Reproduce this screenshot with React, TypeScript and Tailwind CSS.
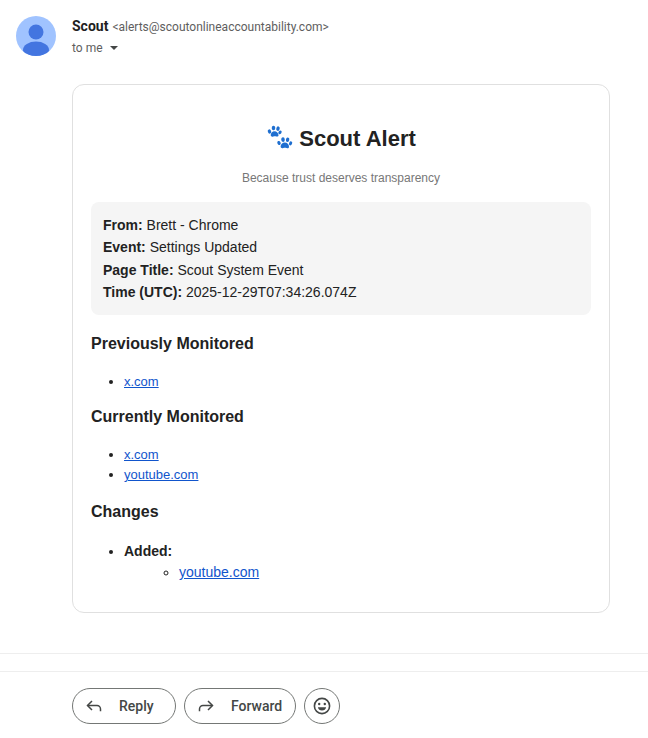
const Paw = () => (
  <svg width="28" height="28" viewBox="0 0 28 28" fill="#1f6fd0" className="shrink-0">
    <ellipse cx="3.5" cy="7.5" rx="1.7" ry="2.2" transform="rotate(-20 3.5 7.5)" />
    <ellipse cx="7.5" cy="4" rx="1.8" ry="2.3" transform="rotate(-5 7.5 4)" />
    <ellipse cx="12" cy="4.6" rx="1.7" ry="2.3" transform="rotate(15 12 4.6)" />
    <ellipse cx="14" cy="8.4" rx="1.5" ry="2" transform="rotate(35 14 8.4)" />
    <path d="M8.5 7.2c2.2 0 4 2 4 4 0 1.5-1.3 1.5-2.2 1.2-1.1-.4-2-.3-3 .2-1.2.5-2.6 0-2.6-1.5 0-2 1.6-3.9 3.8-3.9z" />
    <ellipse cx="13" cy="19" rx="1.6" ry="2.1" transform="rotate(-25 13 19)" />
    <ellipse cx="17" cy="15.6" rx="1.8" ry="2.3" transform="rotate(-5 17 15.6)" />
    <ellipse cx="21.6" cy="15.8" rx="1.7" ry="2.3" transform="rotate(10 21.6 15.8)" />
    <ellipse cx="24.6" cy="19.4" rx="1.5" ry="2.1" transform="rotate(25 24.6 19.4)" />
    <path d="M18.8 18.6c2.4 0 4.2 2 4.2 4.1 0 1.6-1.4 1.7-2.4 1.3-1.2-.4-2.2-.4-3.3.1-1.2.5-2.7.1-2.7-1.5 0-2.1 1.9-4 4.2-4z" />
  </svg>
);

const ReplyIcon = () => (
  <svg width="20" height="20" viewBox="0 0 20 20" fill="none" stroke="#444746" strokeWidth="1.5">
    <path d="M8 5 3.5 9.5 8 14" />
    <path d="M3.8 9.5H13a3.5 3.5 0 0 1 3.5 3.5v2.2" />
  </svg>
);

const ForwardIcon = () => (
  <svg width="20" height="20" viewBox="0 0 20 20" fill="none" stroke="#444746" strokeWidth="1.5">
    <path d="M12 5l4.5 4.5L12 14" />
    <path d="M16.2 9.5H7A3.5 3.5 0 0 0 3.5 13v2.2" />
  </svg>
);

const SmileIcon = () => (
  <svg width="20" height="20" viewBox="0 0 20 20">
    <circle cx="10" cy="10" r="7.6" fill="none" stroke="#444746" strokeWidth="1.6" />
    <circle cx="7.2" cy="8" r="1.2" fill="#444746" />
    <circle cx="12.8" cy="8" r="1.2" fill="#444746" />
    <path d="M5.9 11.2h8.2a4.2 4.2 0 0 1-8.2 0z" fill="#444746" />
  </svg>
);

const linkClass = "text-[#1155cc] underline";

export default function App() {
  return (
    <div className="w-[648px] h-[738px] overflow-hidden bg-white font-['Liberation_Sans',Arial,sans-serif] text-[#222]">
      {/* sender row */}
      <div className="flex pl-4 pt-4 h-[84px]">
        <svg width="40" height="40" viewBox="0 0 40 40" className="shrink-0">
          <defs>
            <clipPath id="av">
              <circle cx="20" cy="20" r="20" />
            </clipPath>
          </defs>
          <circle cx="20" cy="20" r="20" fill="#a0c3ff" />
          <g clipPath="url(#av)" fill="#4375e0">
            <circle cx="20" cy="16" r="7.5" />
            <ellipse cx="20" cy="34" rx="13" ry="8.5" />
          </g>
        </svg>
        <div className="ml-4 font-['Roboto',sans-serif]">
          <div className="flex items-baseline h-5 leading-5">
            <span className="text-[14px] font-bold text-[#1f1f1f]">Scout</span>
            <span className="ml-1 text-[12px] text-[#5e5e5e]">&lt;alerts@scoutonlineaccountability.com&gt;</span>
          </div>
          <div className="flex items-center h-5 mt-0.5 text-[12px] text-[#5e5e5e]">
            to me
            <span className="ml-[7px] w-0 h-0 border-x-4 border-t-4 border-x-transparent border-t-[#444746]" />
          </div>
        </div>
      </div>

      {/* message card */}
      <div className="ml-[72px] w-[538px] h-[529px] rounded-xl border border-[#e0e0e0] px-[18px] pt-[18px]">
        <div className="flex justify-center items-center gap-[5px] h-[70px]">
          <Paw />
          <h1 className="text-[22px] font-bold text-[#222]">Scout Alert</h1>
        </div>
        <p className="text-center text-[12px] leading-[18px] text-[#777] mt-[-4px]">Because trust deserves transparency</p>

        <div className="mt-[15px] h-[113px] rounded-lg bg-[#f5f5f5] px-3 py-3 text-[14px] leading-[22.4px] text-[#222]">
          <div><b>From:</b> Brett - Chrome</div>
          <div><b>Event:</b> Settings Updated</div>
          <div><b>Page Title:</b> Scout System Event</div>
          <div><b>Time (UTC):</b> 2025-12-29T07:34:26.074Z</div>
        </div>

        <h3 className="mt-[16px] text-[16px] leading-[25px] font-bold">Previously Monitored</h3>
        <ul className="mt-[16px] pl-[33px] list-disc text-[13px] leading-[20px]">
          <li><a className={linkClass}>x.com</a></li>
        </ul>

        <h3 className="mt-[12px] text-[16px] leading-[25px] font-bold">Currently Monitored</h3>
        <ul className="mt-[16px] pl-[33px] list-disc text-[13px] leading-[20px]">
          <li><a className={linkClass}>x.com</a></li>
          <li><a className={linkClass}>youtube.com</a></li>
        </ul>

        <h3 className="mt-[14px] text-[16px] leading-[25px] font-bold">Changes</h3>
        <ul className="mt-[17px] pl-[33px] list-disc text-[14px] leading-[21px]">
          <li>
            <b>Added:</b>
            <ul className="pl-[55px] list-[circle]">
              <li><a className={linkClass}>youtube.com</a></li>
            </ul>
          </li>
        </ul>
      </div>

      {/* bottom actions */}
      <div className="mt-[40px] border-t border-[#eeeeee] h-[18px]" />
      <div className="border-t border-[#eeeeee] pl-[72px] pt-[16px] flex gap-2 font-['Roboto',sans-serif] text-[14px] font-medium text-[#444746]">
        <button className="flex items-center w-[104px] h-9 rounded-full border border-[#747775] pl-[11px]">
          <ReplyIcon />
          <span className="ml-[15px]">Reply</span>
        </button>
        <button className="flex items-center w-[112px] h-9 rounded-full border border-[#747775] pl-[11px]">
          <ForwardIcon />
          <span className="ml-[15px]">Forward</span>
        </button>
        <button className="flex items-center justify-center w-9 h-9 rounded-full border border-[#747775]">
          <SmileIcon />
        </button>
      </div>
    </div>
  );
}
